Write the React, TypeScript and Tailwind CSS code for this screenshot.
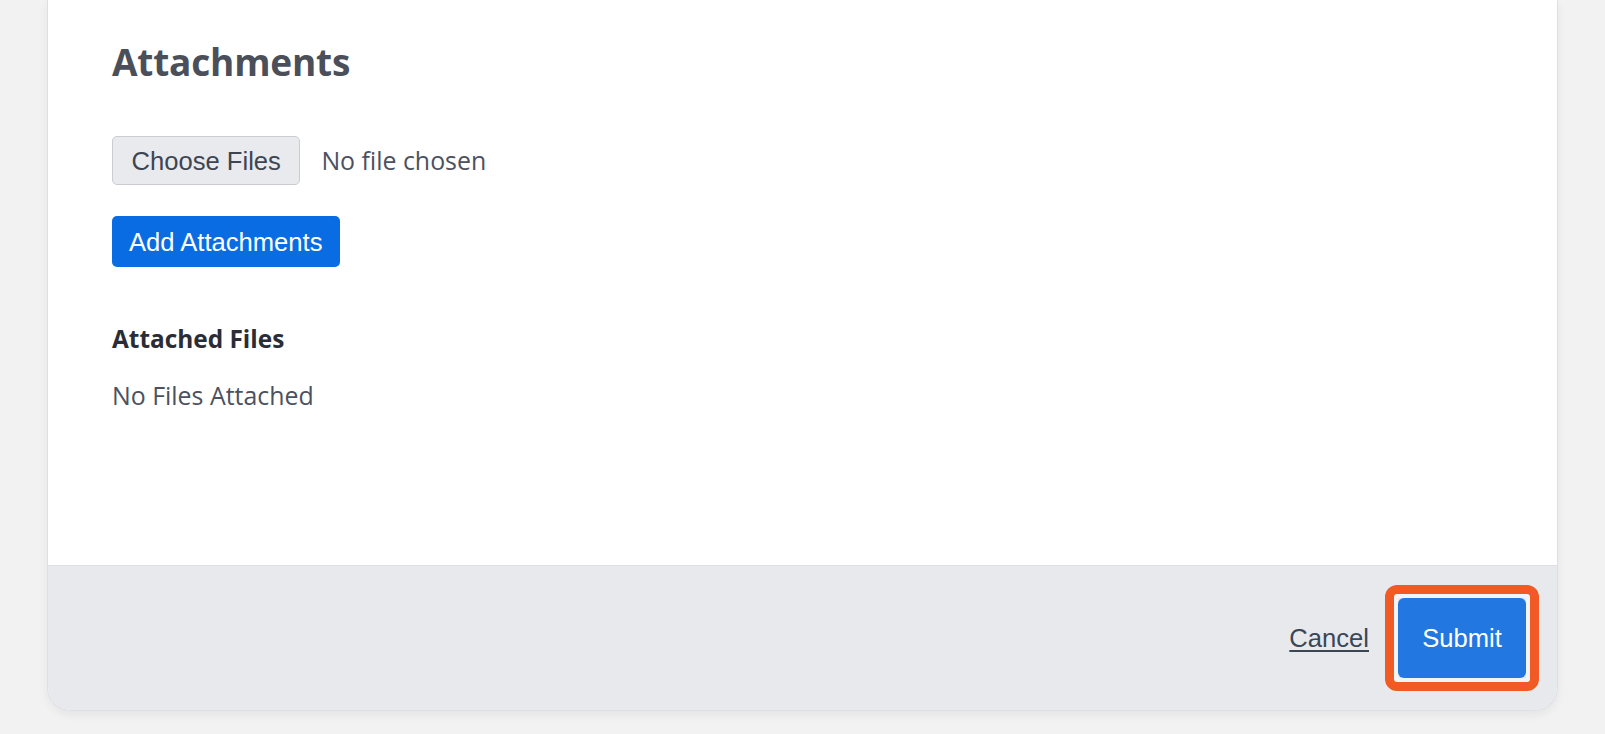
import React from 'react';

const arial = { fontFamily: '"Liberation Sans", Arial, sans-serif' };
const sans = { fontFamily: '"Open Sans", "Noto Sans", sans-serif' };

export default function App() {
  return (
    <div className="min-h-screen w-full bg-[#f2f2f2] px-[47px]">
      <div className="w-[1511px] overflow-hidden rounded-b-[24px] border-x-[1.5px] border-b-[1.5px] border-[#dcdfe4] bg-white shadow-[0_4px_10px_rgba(0,0,0,0.06)]">
        {/* Body */}
        <div className="flex h-[565px] flex-col items-start px-16 pt-[40px]" style={sans}>
          <h2 className="text-[37px] font-bold leading-[1.2] tracking-[-0.2px] text-[#4b4f5a]">Attachments</h2>

          <div className="mt-[52px] flex items-center">
            <button
              className="flex h-[49px] items-center rounded-[5px] border-[1.5px] border-[#c9ccd1] bg-[#e9eaee] px-[18.5px] text-[25.6px] text-[#3e4552]"
              style={arial}
            >
              Choose Files
            </button>
            <span className="ml-[21px] text-[24.9px] text-[#4b5160]">No file chosen</span>
          </div>

          <button
            className="mt-[31px] flex h-[51px] items-center rounded-[5px] bg-[#0a6ce3] px-[17px] text-[25.6px] text-white"
            style={arial}
          >
            Add Attachments
          </button>

          <h3 className="mt-[54px] text-[24.4px] font-bold leading-[1.5] text-[#2b2d36]">Attached Files</h3>
          <p className="mt-[19px] text-[24.9px] leading-[1.5] text-[#4b5160]">No Files Attached</p>
        </div>

        {/* Footer */}
        <div className="flex h-[145px] items-center justify-end gap-[29px] border-t-[1.5px] border-[#dcdfe4] bg-[#e8e9ed] pr-[31px]">
          <a href="#" className="text-[25.6px] text-[#3b4656] underline underline-offset-[3px]" style={arial}>
            Cancel
          </a>
          <div className="relative">
            <button
              className="flex h-[80px] w-[128px] items-center justify-center rounded-[6px] bg-[#2277e0] text-[25.6px] text-white"
              style={arial}
            >
              Submit
            </button>
            <div className="pointer-events-none absolute -inset-[13px] rounded-[12px] border-[9px] border-[#f15a24] shadow-[inset_0_0_0_4px_#f3f4f6]" />
          </div>
        </div>
      </div>
    </div>
  );
}
